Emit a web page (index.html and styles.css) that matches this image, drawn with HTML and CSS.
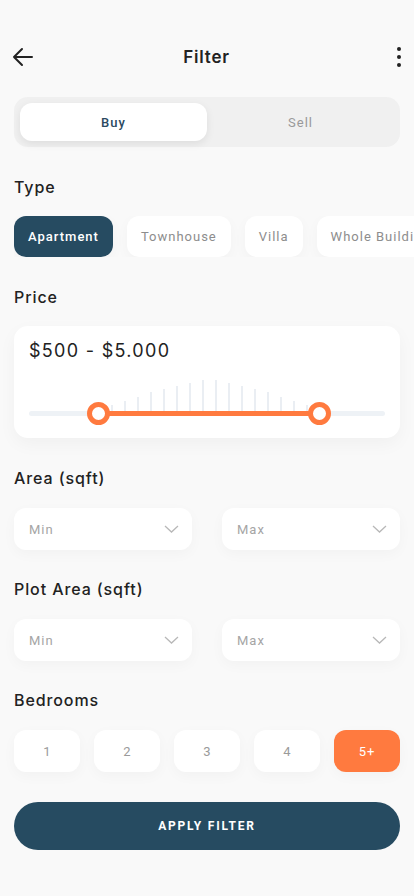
FILE: index.html
```html
<!DOCTYPE html>
<html lang="en">

<head>
  <meta charset="UTF-8">
  <title>Filter</title>
  <link rel="stylesheet" href="styles.css">
</head>

<body>

  <header class="top-bar">
    <button class="icon-btn" aria-label="Back">
      <svg width="22" height="20" viewBox="0 0 22 20" fill="none" stroke="#222" stroke-width="2" stroke-linecap="round" stroke-linejoin="round">
        <path d="M20 10H2M10 2L2 10l8 8" />
      </svg>
    </button>
    <h1>Filter</h1>
    <button class="icon-btn more" aria-label="More">
      <span></span><span></span><span></span>
    </button>
  </header>

  <div class="tabs">
    <button class="tab active">Buy</button>
    <button class="tab">Sell</button>
  </div>

  <h2>Type</h2>
  <div class="chips">
    <button class="chip active">Apartment</button>
    <button class="chip">Townhouse</button>
    <button class="chip">Villa</button>
    <button class="chip">Whole Building</button>
  </div>

  <h2>Price</h2>
  <div class="price-card">
    <div class="price-value">$500 - $5.000</div>
    <div class="slider">
      <div class="bars" id="bars"></div>
      <div class="track"></div>
      <div class="range"></div>
      <span class="thumb left"></span>
      <span class="thumb right"></span>
    </div>
  </div>

  <h2>Area (sqft)</h2>
  <div class="selects">
    <div class="select">Min <svg width="15" height="8" viewBox="0 0 15 8" fill="none" stroke="#b8b8b8" stroke-width="1.3"><path d="M1 1l6.5 6L14 1" /></svg></div>
    <div class="select">Max <svg width="15" height="8" viewBox="0 0 15 8" fill="none" stroke="#b8b8b8" stroke-width="1.3"><path d="M1 1l6.5 6L14 1" /></svg></div>
  </div>

  <h2>Plot Area (sqft)</h2>
  <div class="selects">
    <div class="select">Min <svg width="15" height="8" viewBox="0 0 15 8" fill="none" stroke="#b8b8b8" stroke-width="1.3"><path d="M1 1l6.5 6L14 1" /></svg></div>
    <div class="select">Max <svg width="15" height="8" viewBox="0 0 15 8" fill="none" stroke="#b8b8b8" stroke-width="1.3"><path d="M1 1l6.5 6L14 1" /></svg></div>
  </div>

  <h2>Bedrooms</h2>
  <div class="rooms">
    <button class="room">1</button>
    <button class="room">2</button>
    <button class="room">3</button>
    <button class="room">4</button>
    <button class="room active">5+</button>
  </div>

  <button class="apply-btn">APPLY FILTER</button>

  <script>
    // histogram heights above the price track
    const heights = [9, 13, 17, 22, 25, 28, 31, 34, 34, 31, 28, 25, 22, 17, 13, 9];
    const bars = document.getElementById("bars");
    heights.forEach(function (h) {
      const bar = document.createElement("span");
      bar.style.height = h + "px";
      bars.appendChild(bar);
    });
  </script>

</body>

</html>
```

FILE: styles.css
```css
* {
  box-sizing: border-box;
}

body {
  margin: 0;
  padding: 0 14px;
  width: 414px;
  min-height: 896px;
  font-family: Roboto, 'Noto Sans', sans-serif;
  background: #f9f9f9;
  color: #222;
  overflow: hidden;
}

button {
  font-family: inherit;
  border: none;
  cursor: pointer;
}

.top-bar {
  display: flex;
  align-items: center;
  justify-content: space-between;
  height: 40px;
  margin-top: 37px;
}

.top-bar h1 {
  margin: 0;
  font-family: Inter, Roboto, sans-serif;
  font-size: 17px;
  font-weight: 600;
  letter-spacing: 0.8px;
  color: #222;
}

.icon-btn {
  background: none;
  padding: 0;
  width: 24px;
  height: 24px;
  display: flex;
  align-items: center;
  margin-left: -2px;
}

.icon-btn.more {
  flex-direction: column;
  justify-content: center;
  align-items: flex-end;
  gap: 4px;
  margin: 0 -1px 0 0;
}

.icon-btn.more span {
  width: 4px;
  height: 4px;
  border-radius: 50%;
  background: #222;
}

.tabs {
  display: flex;
  margin-top: 20px;
  padding: 6px;
  background: #f0f0f0;
  border-radius: 14px;
}

.tab {
  flex: 1;
  height: 38px;
  border-radius: 12px;
  background: transparent;
  font-size: 13px;
  letter-spacing: 1px;
  color: #999;
}

.tab.active {
  background: #fff;
  color: #2b4a5f;
  font-weight: 500;
  box-shadow: 0 3px 8px rgba(0, 0, 0, 0.08);
}

h2 {
  margin: 29px 0 0;
  font-family: Inter, Roboto, sans-serif;
  font-size: 16px;
  font-weight: 500;
  letter-spacing: 0.9px;
  line-height: 22px;
  color: #222;
}

.selects + h2 {
  margin-top: 28px;
}

.chips {
  display: flex;
  gap: 14px;
  margin: 18px -14px 0 0;
  overflow: hidden;
}

.chip {
  flex-shrink: 0;
  height: 41px;
  padding: 0 14px;
  border-radius: 12px;
  background: #fff;
  font-size: 13px;
  letter-spacing: 1px;
  color: #8d8d8d;
  box-shadow: 0 4px 14px rgba(0, 0, 0, 0.03);
}

.chip.active {
  background: #264b61;
  color: #fff;
  font-weight: 500;
}

.price-card {
  margin-top: 18px;
  background: #fff;
  border-radius: 14px;
  padding: 13px 15px 0;
  height: 112px;
  box-shadow: 0 6px 18px rgba(0, 0, 0, 0.04);
}

.price-value {
  font-family: Inter, Roboto, sans-serif;
  font-size: 18px;
  letter-spacing: 1.3px;
  color: #222;
  line-height: 24px;
}

.slider {
  position: relative;
  height: 50px;
  margin-top: 12px;
}

.bars {
  position: absolute;
  left: 82px;
  bottom: 11px;
  display: flex;
  align-items: flex-end;
  gap: 11.5px;
}

.bars span {
  width: 1.5px;
  background: #eaeef3;
}

.track {
  position: absolute;
  left: 0;
  right: 0;
  top: 36px;
  height: 5px;
  border-radius: 3px;
  background: #eef2f6;
}

.range {
  position: absolute;
  left: 69px;
  width: 221px;
  top: 36px;
  height: 5px;
  background: #ff7a3f;
}

.thumb {
  position: absolute;
  top: 27px;
  width: 23px;
  height: 23px;
  border-radius: 50%;
  border: 5px solid #ff7a3f;
  background: #fff;
}

.thumb.left {
  left: 58px;
}

.thumb.right {
  left: 279px;
}

.selects {
  display: flex;
  gap: 30px;
  margin-top: 19px;
}

.select {
  flex: 1;
  height: 42px;
  border-radius: 12px;
  background: #fff;
  display: flex;
  align-items: center;
  justify-content: space-between;
  padding: 0 13px 0 15px;
  font-size: 13px;
  letter-spacing: 1px;
  color: #a5a5a5;
  box-shadow: 0 4px 14px rgba(0, 0, 0, 0.03);
}

.rooms {
  display: flex;
  gap: 14px;
  margin-top: 19px;
}

.room {
  flex: 1;
  height: 42px;
  border-radius: 12px;
  background: #fff;
  font-size: 13px;
  color: #9a9a9a;
  box-shadow: 0 4px 14px rgba(0, 0, 0, 0.03);
}

.room.active {
  background: #ff7a3f;
  color: #fff;
  letter-spacing: 1px;
}

.apply-btn {
  display: block;
  width: 100%;
  height: 48px;
  margin-top: 30px;
  border-radius: 24px;
  background: #264b61;
  color: #fff;
  font-size: 12px;
  font-weight: 700;
  letter-spacing: 1.8px;
}
```
